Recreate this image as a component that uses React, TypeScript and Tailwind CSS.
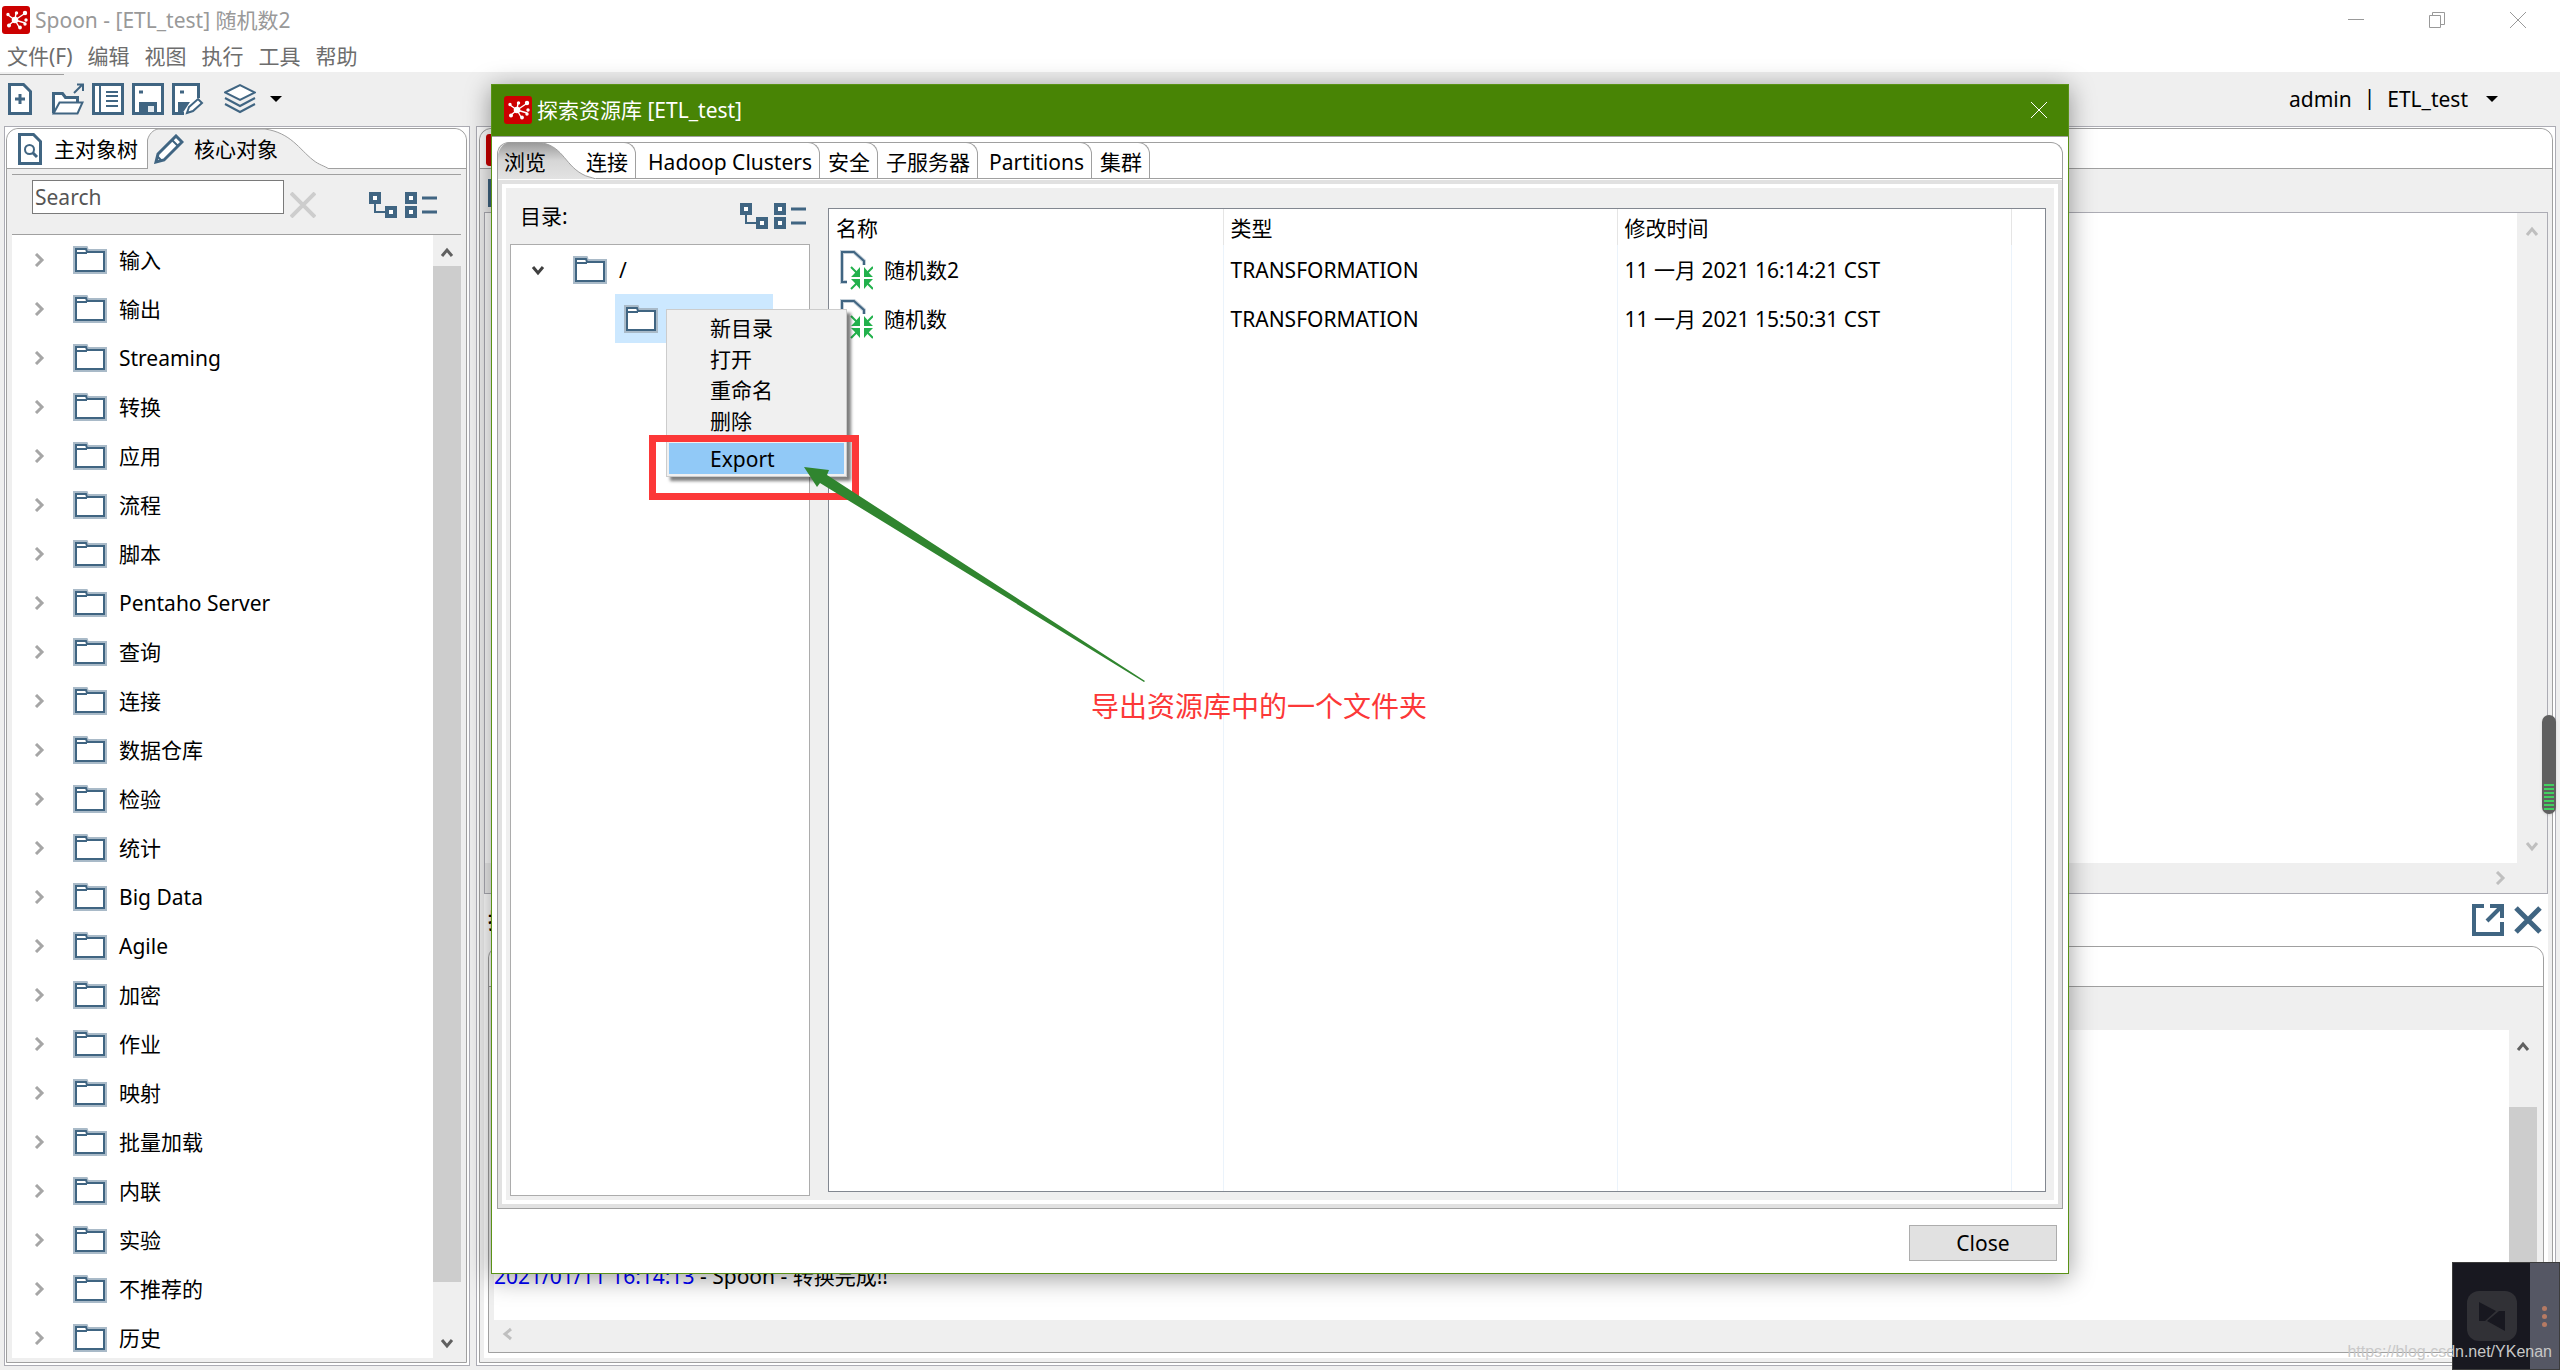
import React from 'react';
import type { ReactNode } from 'react';

const STEEL = '#406582';

const menus = ['文件(F)', '编辑', '视图', '执行', '工具', '帮助'];

const categories = [
  '输入',
  '输出',
  'Streaming',
  '转换',
  '应用',
  '流程',
  '脚本',
  'Pentaho Server',
  '查询',
  '连接',
  '数据仓库',
  '检验',
  '统计',
  'Big Data',
  'Agile',
  '加密',
  '作业',
  '映射',
  '批量加载',
  '内联',
  '实验',
  '不推荐的',
  '历史',
];

const files = [
  { name: '随机数2', type: 'TRANSFORMATION', modified: '11 一月 2021 16:14:21 CST' },
  { name: '随机数', type: 'TRANSFORMATION', modified: '11 一月 2021 15:50:31 CST' },
];

const SpoonLogo = ({ className }: { className: string }) => (
  <svg viewBox="0 0 28 28" className={className}>
    <rect width="28" height="28" rx="3" fill="#cc0000" />
    <g stroke="#fff" strokeWidth="1.4" fill="#fff">
      <path d="M13 14 6 9M13 14l1-7M13 14l9-6M13 14l10 3M13 14l4 7M13 14l-6 5" />
      <circle cx="13" cy="14" r="2.6" />
      <circle cx="6" cy="8.500" r="1" />
      <circle cx="14.500" cy="7" r="1" />
      <circle cx="23" cy="7" r="1.500" />
      <circle cx="24" cy="14" r="1" />
      <circle cx="23" cy="18" r="1" />
      <circle cx="18" cy="21.500" r="1.200" />
      <circle cx="7" cy="19.500" r="1.300" />
    </g>
  </svg>
);

const Folder = () => (
  <svg viewBox="0 0 34 28" className="h-7 w-[34px] shrink-0" fill="none" strokeLinejoin="miter">
    <path d="M2 26V2h11l1 3h18v21z" stroke="#a9bac8" strokeWidth="4" />
    <path d="M3 25V3h10l1 3h17v19z" fill="#fff" stroke={STEEL} strokeWidth="2" />
    <path d="M3 7h11" stroke={STEEL} strokeWidth="2" />
  </svg>
);

const FileIcon = () => (
  <svg viewBox="0 0 34 40" className="h-10 w-[34px] shrink-0" fill="none">
    <path d="M8 32H3V2h12l10 9v4" stroke={STEEL} strokeOpacity=".3" strokeWidth="4" />
    <path d="M8 32H3V2h12l10 9v4" stroke={STEEL} strokeWidth="2" />
    <g stroke="#22b14c" strokeWidth="2">
      <path d="m12 17 8 8M34 17l-8 8M12 39l8-8M34 39l-8-8" />
    </g>
    <g fill="#22b14c">
      <path d="M21 17v10H12l3-3zM25 17v10h9l-3-3zM21 39V29H12l3 3zM25 39V29h9l-3 3z" />
    </g>
  </svg>
);

const Chevron = ({ d, color }: { d: 'up' | 'down' | 'left' | 'right'; color: string }) => {
  const paths = {
    up: 'M2 10l5-6 5 6',
    down: 'M2 4l5 6 5-6',
    left: 'M10 2 4 7l6 5',
    right: 'M4 1l6 6-6 6',
  };
  return (
    <svg viewBox="0 0 14 14" className="size-3.5 shrink-0" fill="none">
      <path d={paths[d]} stroke={color} strokeWidth="3" />
    </svg>
  );
};

const ExpandTree = () => (
  <svg viewBox="0 0 28 26" className="h-[26px] w-7" fill="none" stroke={STEEL}>
    <path d="M2 2h8v8H2zM18 16h8v8h-8z" fill="#fff" strokeWidth="4" />
    <path d="M6 11v9h11" strokeWidth="2" />
  </svg>
);

const CollapseTree = () => (
  <svg viewBox="0 0 32 26" className="h-[26px] w-8" fill="none" stroke={STEEL}>
    <path d="M2 2h8v8H2zM2 16h8v8H2z" fill="#fff" strokeWidth="4" />
    <path d="M17 6h15M17 20h15" strokeWidth="3" />
  </svg>
);

const Caret = () => (
  <svg viewBox="0 0 12 6" className="h-1.5 w-3">
    <path d="M0 0h12L6 6z" fill="#000" />
  </svg>
);

const ToolButton = ({ label, w, children }: { label: string; w?: string; children: ReactNode }) => (
  <button aria-label={label} className={w ?? 'w-8'}>
    <svg viewBox="0 0 32 32" className="size-8" fill="none" stroke={STEEL} strokeWidth="3">
      {children}
    </svg>
  </button>
);

const TitleBar = () => (
  <header className="flex h-10 items-center bg-white pl-0.5 text-[#999]">
    <SpoonLogo className="size-7" />
    <h1 className="ml-[5px] flex-1">Spoon - [ETL_test] 随机数2</h1>
    <div className="flex gap-[65px] pr-[34px]">
      <button aria-label="Minimize">
        <svg viewBox="0 0 16 16" className="size-4" stroke="#999">
          <path d="M0 7.500h16" />
        </svg>
      </button>
      <button aria-label="Restore">
        <svg viewBox="0 0 16 16" className="size-4" stroke="#999" fill="none">
          <path d="M.5 3.500h11v12H.5zM3.500 3V.5h12v12H12" />
        </svg>
      </button>
      <button aria-label="Close window">
        <svg viewBox="0 0 16 16" className="size-4" stroke="#999">
          <path d="M0 0l16 16M16 0 0 16" />
        </svg>
      </button>
    </div>
  </header>
);

const Toolbar = () => (
  <div className="flex h-[54px] items-center justify-between pr-[62px]">
    <div className="flex h-full flex-col">
      <div className="mt-0.5 h-px w-16 bg-[#a0a0a0]" />
      <div className="flex flex-1 items-center gap-2 pb-[3px] pl-2">
        <ToolButton label="New" w="mr-1 w-8">
          <path d="M1.500 1.500h14l7 7v22h-21z" fill="#fff" />
          <path d="M12 11v10M7 16h10" />
        </ToolButton>
        <ToolButton label="Open">
          <path d="M1.500 30V10.500h9l3 4h12V19" fill="#fff" />
          <path d="M1.500 30.500l6-11h23l-5 11z" fill="#fff" strokeWidth="2" />
          <path d="M22 10l8-8M25 1.500h6V8" strokeWidth="2" />
        </ToolButton>
        <ToolButton label="Explore repository">
          <path d="M1.500 1.500h29v29h-29z" fill="#fff" />
          <path d="M8 2v28M14 9h12M14 13h12M14 18h12M14 23h12" strokeWidth="2" />
        </ToolButton>
        <ToolButton label="Save">
          <path d="M1.500 1.500h29v29h-29z" fill="#fff" />
          <path d="M7 19h18v12H7z" fill={STEEL} stroke="none" />
          <path d="M16 23h6v6h-6z" fill="#e4eaef" stroke="none" />
          <path d="M7 9h4" />
        </ToolButton>
        <ToolButton label="Save as" w="mr-3 w-8">
          <path d="M12 30.500H1.500v-29h25V15" fill="#fff" />
          <path d="M6 19h12l-8 12H6z" fill={STEEL} stroke="none" />
          <path d="M15 30l2-6 9-8 4 4-9 8z" fill="#fff" strokeWidth="2" />
          <path d="M8 9h4" />
        </ToolButton>
        <ToolButton label="Perspective">
          <path d="M1 9.500 16 2l15 7.500L16 17z" fill="#fff" strokeWidth="2" />
          <path d="M1 15l15 8 15-8M1 21l15 8 15-8" strokeWidth="2" />
        </ToolButton>
        <span className="ml-1.5">
          <Caret />
        </span>
      </div>
    </div>
    <button className="flex items-center gap-3">
      <span>admin</span>
      <span className="-mt-1">|</span>
      <span>ETL_test</span>
      <span className="ml-1.5">
        <Caret />
      </span>
    </button>
  </div>
);

const Sidebar = () => (
  <aside className="flex w-[466px] shrink-0 flex-col border border-[#acacb4] bg-white pt-px pr-0.5 pb-0.5 pl-px">
    <div className="flex min-h-0 flex-1 flex-col rounded-t-xl border border-[#a0a0a0] bg-[#efefef]">
      <div className="flex h-10 shrink-0 rounded-t-xl border-b border-[#a0a0a0] bg-white">
        <button className="flex w-[140px] items-center pl-[11px]">
          <svg viewBox="0 0 24 32" className="h-8 w-6 shrink-0" fill="none" stroke={STEEL} strokeWidth="3">
            <path d="M1.500 1.500h14l7 7v22h-21z" fill="#fff" />
            <circle cx="11.500" cy="16.500" r="4.500" strokeWidth="2" />
            <path d="m15 20 4 4" />
          </svg>
          <span className="ml-3">主对象树</span>
        </button>
        <button className="relative flex w-[182px] items-center pl-[7px]">
          <svg viewBox="0 0 182 40" className="absolute top-0 left-0 h-10 w-[182px]">
            <path
              d="M.5 40V11C2 5 6 1 11 0h107c26 4 34 20 48 31 6 5 12 6 16 9"
              fill="#efefef"
              stroke="#a0a0a0"
            />
          </svg>
          <svg viewBox="0 0 30 30" className="relative size-[30px]" fill="none" stroke={STEEL} strokeWidth="3">
            <path d="M2 28l2-8L22 2l6 6-18 18z" fill="#fff" />
            <path d="M18 6l6 6M3 22l5 5" strokeWidth="2" />
          </svg>
          <span className="relative ml-2.5">核心对象</span>
        </button>
      </div>
      <div className="mx-[5px] mt-[5px] flex h-[61px] shrink-0 items-start border-y border-[#a0a0a0] pt-[5px] pr-6 pl-5">
        <input
          aria-label="Search"
          placeholder="Search"
          className="h-[34px] w-[252px] border border-[#7a7a7a] bg-white px-[2px] placeholder:text-[#555]"
        />
        <button aria-label="Clear search" className="mt-3 ml-1.5">
          <svg viewBox="0 0 26 26" className="size-[26px]" stroke="#cdcdcd" strokeWidth="4">
            <path d="M1 1l24 24M25 1 1 25" />
          </svg>
        </button>
        <div className="mt-3 ml-auto flex gap-2">
          <button aria-label="Expand all">
            <ExpandTree />
          </button>
          <button aria-label="Collapse all">
            <CollapseTree />
          </button>
        </div>
      </div>
      <div className="mx-[5px] mb-1 flex min-h-0 flex-1">
        <ul className="flex-1 overflow-hidden bg-white">
          {categories.map((name) => (
            <li key={name}>
              <button className="flex h-[49px] w-full items-center pl-5">
                <Chevron d="right" color="#a6a6a6" />
                <span className="mr-3 ml-[27px]">
                  <Folder />
                </span>
                {name}
              </button>
            </li>
          ))}
        </ul>
        <div className="flex w-7 flex-col items-center">
          <div className="flex h-[31px] items-center pt-1">
            <Chevron d="up" color="#606060" />
          </div>
          <div className="w-full flex-1 bg-[#cdcdcd]" />
          <div className="flex h-[76px] items-end pb-2">
            <Chevron d="down" color="#606060" />
          </div>
        </div>
      </div>
    </div>
  </aside>
);

const Workspace = () => (
  <main className="flex min-w-0 flex-1 flex-col border border-[#acacb4] bg-white pt-px pr-0.5 pb-0.5 pl-0.5">
    <div className="flex min-h-0 flex-1 flex-col rounded-t-xl border border-[#a0a0a0] bg-[#efefef] px-1 pb-1">
      <div className="-mx-1 h-10 shrink-0 rounded-t-xl border-b border-[#a0a0a0] bg-white pt-[5px] pl-1.5">
        <SpoonLogo className="size-8" />
      </div>
      <div className="h-[43px] shrink-0 pt-2.5 pl-1">
        <svg viewBox="0 0 24 28" className="h-7 w-6">
          <path d="M0 0h24v28H0z" fill={STEEL} />
        </svg>
      </div>

      <section className="flex min-h-0 flex-1 flex-col border border-[#acacb4] bg-[#efefef]">
        <div className="flex flex-1">
          <div className="flex-1 bg-white" />
          <div className="flex w-[30px] flex-col items-center justify-between pt-3 pb-2.5">
            <Chevron d="up" color="#bfbfbf" />
            <Chevron d="down" color="#bfbfbf" />
          </div>
        </div>
        <div className="flex h-[30px] items-center justify-end pr-10">
          <Chevron d="right" color="#bfbfbf" />
        </div>
      </section>

      <section className="bg-white px-1 pb-[5px]">
        <div className="flex h-[52px] items-center pr-0.5">
          <h2 className="flex-1 font-bold">执行结果</h2>
          <button aria-label="Maximize results" className="mr-2.5">
            <svg viewBox="0 0 32 32" className="size-8" fill="none" stroke={STEEL} strokeWidth="4">
              <path d="M12 2H2v28h28V18M18 2h12v12" />
              <path d="M15 17 29 3" />
            </svg>
          </button>
          <button aria-label="Close results">
            <svg viewBox="0 0 28 28" className="size-7" stroke={STEEL} strokeWidth="5">
              <path d="M2 2l24 24M26 2 2 26" />
            </svg>
          </button>
        </div>
        <div className="flex h-[407px] flex-col rounded-t-xl border border-[#a0a0a0] bg-[#efefef]">
          <div className="h-10 rounded-t-xl border-b border-[#a0a0a0] bg-white" />
          <div className="mt-[43px] flex flex-1 pr-1.5 pl-[5px]">
            <div className="flex flex-1 flex-col justify-end bg-white pb-[30px]">
              <p>
                <span className="text-[#0000ff]">2021/01/11 16:14:13</span> - Spoon - 转换完成!!
              </p>
            </div>
            <div className="flex w-7 flex-col items-center">
              <div className="flex h-[77px] items-start pt-2.5">
                <Chevron d="up" color="#606060" />
              </div>
              <div className="w-full flex-1 bg-[#cdcdcd]" />
            </div>
          </div>
          <div className="flex h-8 items-center pb-1 pl-3">
            <Chevron d="left" color="#bfbfbf" />
          </div>
        </div>
      </section>
    </div>
  </main>
);

const tabClass =
  '-mt-px flex shrink-0 items-center justify-end rounded-tr-xl border-t border-r border-[#a0a0a0] pt-0.5 pr-[7px] whitespace-nowrap';

const ExplorerTabs = () => (
  <div className="flex h-[37px] shrink-0 rounded-t-xl border-x border-t border-[#a0a0a0] bg-white">
    <button className="relative flex w-[98px] shrink-0 items-center pt-px pl-1.5">
      <svg viewBox="0 0 98 37" className="absolute -top-px left-0 h-[37px] w-[98px]">
        <defs>
          <linearGradient id="activeTab" x1="0" y1="0" x2="0" y2="1">
            <stop offset="0" stopColor="#999" />
            <stop offset=".5" stopColor="#d6d6d6" />
            <stop offset="1" stopColor="#e3e3e3" />
          </linearGradient>
        </defs>
        <path d="M0 37V12C2 5 6 1 11 .5h29C64 2 66 22 84 32c5 3 9 3 14 5z" fill="url(#activeTab)" />
        <path d="M40 .5C64 2 66 22 84 32c5 3 9 3 14 5" fill="none" stroke="#a0a0a0" />
      </svg>
      <span className="relative">浏览</span>
    </button>
    <div className="flex flex-1 border-b border-[#a0a0a0]">
      <button className={`${tabClass} -ml-5 w-[60px]`}>连接</button>
      <button className={`${tabClass} w-[184px]`}>Hadoop Clusters</button>
      <button className={`${tabClass} w-[58px]`}>安全</button>
      <button className={`${tabClass} w-[100px]`}>子服务器</button>
      <button className={`${tabClass} w-[114px]`}>Partitions</button>
      <button className={`${tabClass} w-[58px]`}>集群</button>
    </div>
  </div>
);

const DirectoryTree = () => (
  <div className="flex w-[300px] shrink-0 flex-col">
    <div className="flex h-14 items-center pr-1 pl-2.5">
      <span className="flex-1">目录:</span>
      <div className="flex gap-1.5">
        <button aria-label="Expand directories">
          <ExpandTree />
        </button>
        <button aria-label="Collapse directories">
          <CollapseTree />
        </button>
      </div>
    </div>
    <ul className="flex-1 border border-[#acacac] bg-white">
      <li>
        <button className="flex h-[49px] items-center pl-5">
          <Chevron d="down" color="#404040" />
          <span className="mr-3 ml-7">
            <Folder />
          </span>
          /
        </button>
      </li>
      <li>
        <button
          aria-label="Selected folder"
          className="ml-[104px] flex h-[49px] w-[158px] items-center bg-[#cce8ff] pl-[9px]"
        >
          <Folder />
        </button>
      </li>
    </ul>
  </div>
);

const FileTable = () => (
  <div className="flex-1 border border-[#828790] bg-white">
    <table className="h-full w-full table-fixed text-left">
      <colgroup>
        <col className="w-[394px]" />
        <col className="w-[394px]" />
        <col className="w-[394px]" />
        <col />
      </colgroup>
      <thead>
        <tr className="h-9">
          {['名称', '类型', '修改时间'].map((title) => (
            <th key={title} className="border-r border-[#e5e5e5] pt-px pl-[7px] font-normal">
              {title}
            </th>
          ))}
          <td />
        </tr>
      </thead>
      <tbody>
        {files.map((file) => (
          <tr key={file.name} className="h-[49px]">
            <td className="border-r border-[#ebf3fb]">
              <div className="flex items-center gap-[11px] pl-2.5">
                <FileIcon />
                {file.name}
              </div>
            </td>
            <td className="border-r border-[#ebf3fb] pl-[7px]">{file.type}</td>
            <td className="border-r border-[#ebf3fb] pl-[7px]">{file.modified}</td>
            <td />
          </tr>
        ))}
        <tr>
          <td className="border-r border-[#ebf3fb]" />
          <td className="border-r border-[#ebf3fb]" />
          <td className="border-r border-[#ebf3fb]" />
          <td />
        </tr>
      </tbody>
    </table>
  </div>
);

const RepositoryExplorer = () => (
  <div
    role="dialog"
    aria-label="探索资源库"
    className="absolute inset-x-[491px] top-[84px] bottom-24 flex flex-col border border-[#5a9216] bg-white shadow-[0_4px_24px_rgba(0,0,0,0.4)]"
  >
    <div className="flex h-[51px] shrink-0 items-center bg-[#488405] pr-[21px] pb-0.5 pl-3 text-white">
      <SpoonLogo className="size-7" />
      <h2 className="ml-[5px] flex-1">探索资源库 [ETL_test]</h2>
      <button aria-label="Close explorer">
        <svg viewBox="0 0 16 16" className="size-4" stroke="#fff">
          <path d="M0 0l16 16M16 0 0 16" />
        </svg>
      </button>
    </div>
    <div className="flex flex-1 flex-col border-t border-[#a0a0a0] px-[5px] pt-[5px]">
      <ExplorerTabs />
      <div className="flex flex-1 flex-col border-x border-b border-[#a0a0a0] bg-white pt-px">
        <div className="flex flex-1 border-4 border-[#e1e1e1] bg-white p-1">
          <div className="flex flex-1 gap-[18px] bg-[#efefef] pr-2 pb-1 pl-1">
            <DirectoryTree />
            <div className="flex flex-1 pt-5 pb-1">
              <FileTable />
            </div>
          </div>
        </div>
      </div>
      <div className="flex h-16 shrink-0 items-center justify-end pt-1 pr-1.5">
        <button className="h-9 w-[148px] border border-[#adadad] bg-[#e1e1e1]">Close</button>
      </div>
    </div>
  </div>
);

const ContextMenu = () => (
  <div
    role="menu"
    className="absolute top-[309px] left-[666px] w-[181px] border border-[#ccc] bg-[#f0f0f0] p-0.5 shadow-[4px_4px_3px_rgba(0,0,0,0.5)]"
  >
    {['新目录', '打开', '重命名', '删除'].map((item) => (
      <button key={item} role="menuitem" className="block h-[31px] w-full pl-[41px] text-left">
        {item}
      </button>
    ))}
    <hr className="mt-[3px] mb-[3px] border-[#d0d0d0]" />
    <button role="menuitem" className="block h-[31px] w-full bg-[#91c9f7] pl-[41px] text-left">
      Export
    </button>
  </div>
);

// red frame, arrow and note drawn over the explorer window
const Annotations = () => (
  <>
    <div className="pointer-events-none absolute top-[435px] left-[649px] h-[65px] w-[210px] border-[7px] border-[#fc3838]" />
    <svg viewBox="0 0 342 216" className="pointer-events-none absolute top-[467px] left-[804px] h-[216px] w-[342px]">
      <path d="M0 0 25 3l-2 5 318 206-1 1L16 16l-3 4z" fill="#30852f" />
    </svg>
    <p className="absolute top-[688px] left-[1091px] text-[28px] leading-9 text-[#fc3838]">
      导出资源库中的一个文件夹
    </p>
  </>
);

const UsagePill = () => (
  <div className="absolute top-[715px] right-1 flex h-[99px] w-3.5 flex-col items-center justify-end gap-px rounded-full bg-[#5f5f5f] pb-1 shadow">
    {[0, 1, 2, 3, 4, 5, 6].map((bar) => (
      <span key={bar} className="mt-px h-0.5 w-2.5 bg-[#41d05f]" />
    ))}
  </div>
);

const RecorderWidget = () => (
  <div className="absolute right-0 bottom-0 flex size-[108px] border border-[#3c3c3c] bg-[#181820]">
    <div className="flex flex-1 items-center justify-center">
      <svg viewBox="0 0 50 50" className="size-[50px]">
        <rect width="50" height="50" rx="12" fill="#313136" />
        <path d="M12 11v19h6l11-10zM38 40V20h-6L20 30z" fill="#181820" />
      </svg>
    </div>
    <div className="flex w-[29px] flex-col items-center justify-center gap-[3px] bg-[#555764]">
      <span className="size-[5px] rounded-full bg-[#b57a63]" />
      <span className="size-[5px] rounded-full bg-[#b57a63]" />
      <span className="size-[5px] rounded-full bg-[#b57a63]" />
    </div>
  </div>
);

export default function App() {
  return (
    <div className="relative flex h-screen flex-col overflow-hidden bg-[#efefef] font-['Noto_Sans','Noto_Sans_CJK_SC',sans-serif] text-[21px] leading-7 text-black">
      <TitleBar />
      <nav className="flex h-8 items-center gap-[15px] bg-white pl-[7px] text-[#6d6d6d]">
        {menus.map((menu) => (
          <button key={menu}>{menu}</button>
        ))}
      </nav>
      <Toolbar />
      <div className="flex min-h-0 flex-1 gap-1.5 pr-1 pb-1 pl-1">
        <Sidebar />
        <Workspace />
      </div>
      <RepositoryExplorer />
      <ContextMenu />
      <Annotations />
      <UsagePill />
      <RecorderWidget />
      <p className="absolute right-2 bottom-1.5 font-['Liberation_Sans',sans-serif] text-base text-[#c8c8c8]">
        https://blog.csdn.net/YKenan
      </p>
    </div>
  );
}
